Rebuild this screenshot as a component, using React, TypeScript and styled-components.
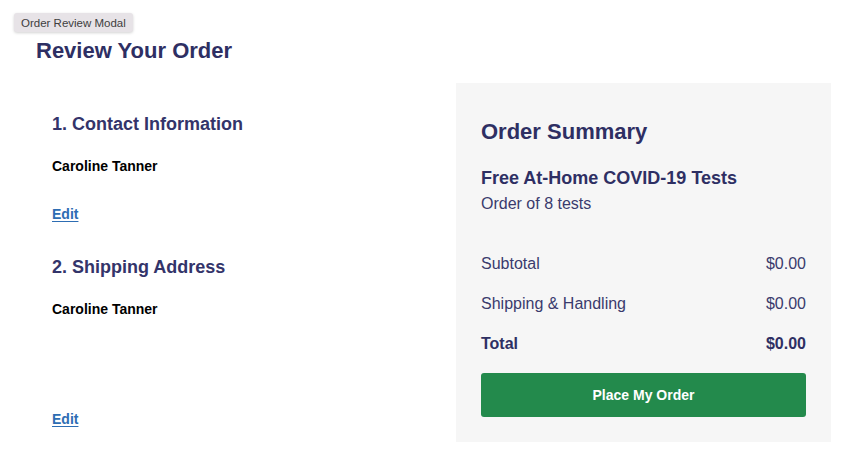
import styled, { createGlobalStyle } from 'styled-components';

const GlobalStyle = createGlobalStyle`
  html, body {
    margin: 0;
    padding: 0;
    background: #ffffff;
  }

  body {
    font-family: 'Liberation Sans', Arial, Helvetica, sans-serif;
    -webkit-font-smoothing: antialiased;
  }
`;

const StyledPage = styled.main`
  position: relative;
  padding: 38px 28px 11px 36px;
`;

const ModalTag = styled.div`
  position: absolute;
  top: 13px;
  left: 14px;
  height: 19px;
  padding: 0 7px;
  display: flex;
  align-items: center;
  background-color: #e7e3e7;
  color: #404040;
  font-size: 11.5px;
  border-radius: 3px;
  box-shadow: rgba(0, 0, 0, 0.18) 0px 1px 3px;
`;

const PageTitle = styled.h1`
  margin: 0;
  color: #2e2f63;
  font-size: 22px;
  line-height: 26px;
  font-weight: 700;
`;

const StyledContent = styled.div`
  display: flex;
  justify-content: space-between;
  margin-top: 19px;
`;

const StyledDetails = styled.div`
  display: flex;
  flex-direction: column;
  padding: 30px 0 0 16px;
`;

const StyledSection = styled.section<{ $gapAfter?: number }>`
  display: flex;
  flex-direction: column;
  margin-bottom: ${({ $gapAfter }) => $gapAfter ?? 0}px;
`;

const SectionTitle = styled.h2`
  margin: 0 0 22px;
  color: #33346a;
  font-size: 18px;
  line-height: 22px;
  font-weight: 700;
`;

const NameText = styled.p`
  margin: 0;
  color: #000;
  font-size: 14px;
  line-height: 18px;
  font-weight: 700;
`;

const AddressLines = styled.div<{ $height: number }>`
  min-height: ${({ $height }) => $height}px;
`;

const EditLink = styled.a`
  align-self: flex-start;
  color: #2d6db3;
  font-size: 14px;
  line-height: 17px;
  font-weight: 700;
  text-decoration: underline;
  text-underline-offset: 2px;
  cursor: pointer;
`;

const StyledSummary = styled.aside`
  width: 375px;
  box-sizing: border-box;
  padding: 36px 25px 25px;
  background-color: #f6f6f6;
  display: flex;
  flex-direction: column;
`;

const SummaryTitle = styled.h2`
  margin: 0 0 22px;
  color: #2e2f63;
  font-size: 22px;
  line-height: 26px;
  font-weight: 700;
`;

const ProductTitle = styled.h3`
  margin: 0 0 5px;
  color: #2e2f63;
  font-size: 18px;
  line-height: 22px;
  font-weight: 700;
`;

const ProductMeta = styled.p`
  margin: 0 0 40px;
  color: #3a3b6d;
  font-size: 16px;
  line-height: 20px;
`;

const PriceList = styled.dl`
  margin: 0 0 19px;
  display: flex;
  flex-direction: column;
  gap: 20px;
`;

const PriceRow = styled.div<{ $total?: boolean }>`
  display: flex;
  justify-content: space-between;
  color: ${({ $total }) => ($total ? '#2e2f63' : '#3a3b6d')};
  font-size: 16px;
  line-height: 20px;
  font-weight: ${({ $total }) => ($total ? 700 : 400)};

  dt,
  dd {
    margin: 0;
  }
`;

const PlaceOrderButton = styled.button`
  height: 44px;
  width: 100%;
  border: none;
  border-radius: 3px;
  background-color: #238a4c;
  color: #fff;
  font-family: inherit;
  font-size: 14px;
  font-weight: 700;
  cursor: pointer;
`;

type TLine = {
  label: string;
  amount: number;
  total?: boolean;
};

const lines: TLine[] = [
  { label: 'Subtotal', amount: 0 },
  { label: 'Shipping & Handling', amount: 0 },
  { label: 'Total', amount: 0, total: true },
];

const App = () => {
  return (
    <>
      <GlobalStyle />
      <StyledPage>
        <ModalTag>Order Review Modal</ModalTag>
        <PageTitle>Review Your Order</PageTitle>
        <StyledContent>
          <StyledDetails>
            <StyledSection $gapAfter={33}>
              <SectionTitle>1. Contact Information</SectionTitle>
              <NameText>Caroline Tanner</NameText>
              <AddressLines $height={31} />
              <EditLink>Edit</EditLink>
            </StyledSection>
            <StyledSection>
              <SectionTitle>2. Shipping Address</SectionTitle>
              <NameText>Caroline Tanner</NameText>
              <AddressLines $height={93} />
              <EditLink>Edit</EditLink>
            </StyledSection>
          </StyledDetails>
          <StyledSummary>
            <SummaryTitle>Order Summary</SummaryTitle>
            <ProductTitle>Free At-Home COVID-19 Tests</ProductTitle>
            <ProductMeta>Order of 8 tests</ProductMeta>
            <PriceList>
              {lines.map((line) => (
                <PriceRow key={line.label} $total={line.total}>
                  <dt>{line.label}</dt>
                  <dd>${line.amount.toFixed(2)}</dd>
                </PriceRow>
              ))}
            </PriceList>
            <PlaceOrderButton>Place My Order</PlaceOrderButton>
          </StyledSummary>
        </StyledContent>
      </StyledPage>
    </>
  );
};

export default App;
